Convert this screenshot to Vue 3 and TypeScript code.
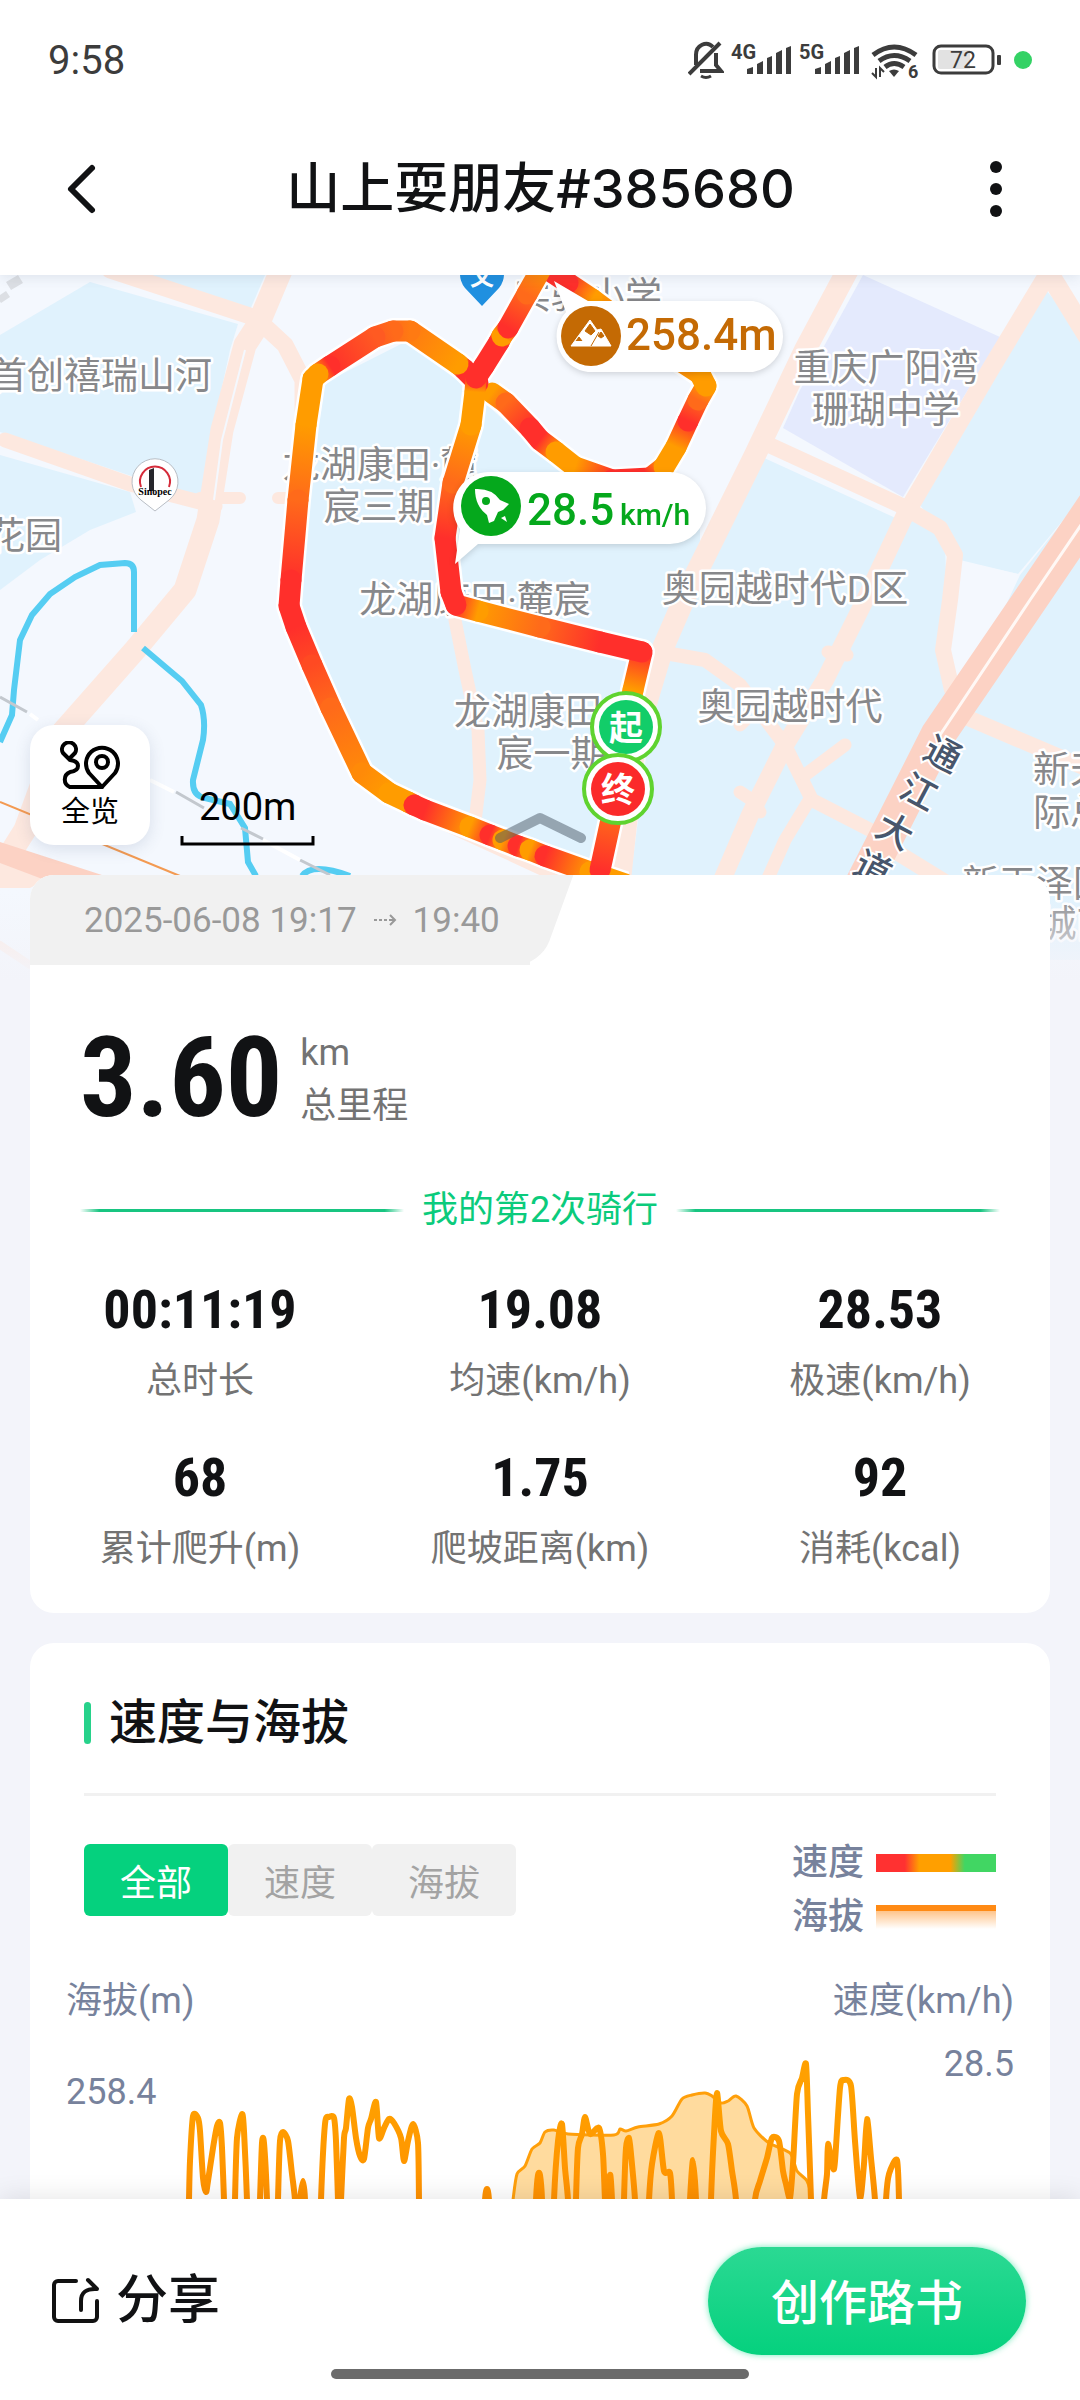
<script setup lang="ts">
import { computed, ref } from 'vue'

type Stop = [number, number, string]
type Point = [number, number]

const R = '#ff2f2b'
const M = '#ff6a1a'
const O = '#ff9c00'

/* Ride track: every vertex carries the colour of the speed at that spot. */
const tracks: Stop[][] = [
  [
    [492, 393, O], [506, 403, M], [530, 428, R], [540, 440, R], [556, 452, O], [575, 467, O], [612, 480, R],
    [650, 478, R], [664, 467, O], [676, 447, O], [688, 421, R], [698, 400, M], [706, 386, O], [700, 374, O],
    [640, 335, M], [592, 299, O], [568, 283, R], [545, 268, R],
  ],
  [
    [478, 383, R], [464, 369, R], [458, 364, O], [410, 331, '#ff7a12'], [393, 331, M], [375, 337, '#ff5a22'],
    [330, 366, R], [318, 374, O], [313, 379, O], [306, 425, O], [298, 500, M], [291, 580, R], [289, 606, R],
    [296, 627, R], [312, 665, '#ff4a22'], [331, 708, '#ff6a1a'], [362, 773, '#ff8a08'], [389, 793, O],
    [408, 802, O], [414, 805, R], [425, 810, R], [470, 827, O], [490, 835, R], [503, 840, O], [518, 846, R],
    [530, 850, O], [545, 856, R], [590, 872, O], [625, 884, O],
  ],
  [
    [618, 789, R], [612, 815, M], [600, 870, R],
  ],
  [
    [626, 727, O], [633, 690, O], [642, 652, R], [600, 642, R], [540, 627, M], [478, 611, O], [456, 605, R],
    [451, 592, R], [445, 538, R], [453, 483, M], [471, 425, O], [475, 392, O], [476, 378, R], [484, 366, R],
    [499, 342, R], [502, 336, O], [508, 328, R], [527, 294, M], [545, 262, O],
  ],
]

const trackPaths = tracks.map((t) => 'M' + t.map(([x, y]) => `${x} ${y}`).join('L'))
const segments = computed(() =>
  tracks.flatMap((t, k) =>
    t.slice(1).map((b, i) => {
      const a = t[i]
      return { id: `seg-${k}-${i}`, x1: a[0], y1: a[1], x2: b[0], y2: b[1], from: a[2], to: b[2] }
    }),
  ),
)

const labels = [
  { text: '首创禧瑞山河', x: 101, y: 389 },
  { text: '花园', x: 25, y: 549 },
  { text: '龙湖康田·麓', x: 380, y: 478 },
  { text: '宸三期', x: 379, y: 520 },
  { text: '龙湖康田·麓宸', x: 475, y: 613 },
  { text: '龙湖康田', x: 528, y: 725 },
  { text: '宸一期', x: 552, y: 767 },
  { text: '奥园越时代D区', x: 785, y: 602 },
  { text: '奥园越时代', x: 790, y: 720 },
  { text: '重庆广阳湾', x: 886, y: 381 },
  { text: '珊瑚中学', x: 886, y: 423 },
  { text: '实验小学', x: 588, y: 309 },
  { text: '新天', x: 1070, y: 783 },
  { text: '际总', x: 1070, y: 826 },
  { text: '新天泽国', x: 1036, y: 897 },
  { text: '际城南', x: 1058, y: 937 },
]
const roadName = [
  { text: '通', x: 943, y: 754 },
  { text: '江', x: 919, y: 792 },
  { text: '大', x: 895, y: 831 },
  { text: '道', x: 873, y: 869 },
]

const stats = [
  { value: '00:11:19', label: '总时长' },
  { value: '19.08', label: '均速(km/h)' },
  { value: '28.53', label: '极速(km/h)' },
  { value: '68', label: '累计爬升(m)' },
  { value: '1.75', label: '爬坡距离(km)' },
  { value: '92', label: '消耗(kcal)' },
]

const tabs = ['全部', '速度', '海拔']
const activeTab = ref('全部')

const speed: Point[] = [
  [188, 2260], [189, 2199], [190, 2160], [193, 2115], [198, 2117], [200, 2130], [203, 2177], [206, 2191], [208, 2180],
  [213, 2147], [217, 2125], [220, 2122], [222, 2147], [224, 2199], [226, 2260], [234, 2260], [235, 2199], [237, 2137],
  [242, 2113], [244, 2130], [247, 2199], [248, 2260], [258, 2260], [260, 2199], [262, 2142], [264, 2142], [267, 2199],
  [268, 2260], [277, 2260], [278, 2199], [280, 2140], [283, 2131], [288, 2140], [292, 2173], [295, 2199], [297, 2240],
  [300, 2199], [303, 2180], [305, 2199], [306, 2260], [320, 2260], [321, 2199], [325, 2123], [329, 2116], [334, 2117],
  [336, 2140], [338, 2199], [339, 2240], [341, 2199], [344, 2137], [346, 2127], [349, 2098], [352, 2106], [356, 2137],
  [360, 2155], [364, 2158], [368, 2127], [371, 2118], [376, 2101], [379, 2137], [384, 2127], [389, 2118], [394, 2122],
  [401, 2137], [404, 2160], [408, 2140], [413, 2123], [418, 2142], [419, 2199], [420, 2260], [482, 2260], [485, 2199],
  [487, 2188], [489, 2199], [492, 2260], [534, 2260], [536, 2199], [538, 2174], [540, 2174], [542, 2199], [543, 2260],
  [553, 2260], [554, 2199], [558, 2140], [562, 2123], [565, 2167], [568, 2199], [570, 2260], [575, 2260], [576, 2199],
  [578, 2147], [582, 2133], [585, 2116], [590, 2133], [599, 2127], [603, 2153], [605, 2199], [607, 2220], [610, 2174],
  [612, 2199], [614, 2260], [623, 2260], [624, 2199], [626, 2147], [629, 2137], [631, 2153], [635, 2199], [637, 2260],
  [647, 2260], [649, 2199], [652, 2163], [659, 2132], [664, 2170], [670, 2172], [672, 2199], [674, 2260], [688, 2260],
  [690, 2199], [693, 2159], [696, 2199], [697, 2260], [710, 2260], [711, 2199], [714, 2133], [717, 2092], [721, 2130],
  [728, 2143], [732, 2170], [736, 2199], [738, 2260], [753, 2260], [755, 2199], [760, 2180], [767, 2157], [772, 2137],
  [779, 2140], [783, 2170], [786, 2183], [790, 2197], [793, 2163], [797, 2093], [802, 2077], [806, 2063], [808, 2113],
  [811, 2199], [812, 2260], [820, 2260], [824, 2199], [827, 2173], [828, 2143], [833, 2167], [835, 2160], [840, 2087],
  [844, 2079], [851, 2085], [855, 2140], [860, 2197], [864, 2163], [867, 2118], [871, 2157], [875, 2199], [878, 2260],
  [884, 2260], [886, 2199], [889, 2173], [897, 2159], [899, 2199], [900, 2260],
]
const altitude: Point[] = [
  [506, 2260], [513, 2199], [517, 2173], [525, 2165], [532, 2148], [540, 2142], [545, 2131], [554, 2129], [568, 2133],
  [614, 2134], [620, 2128], [626, 2130], [638, 2126], [659, 2123], [672, 2115], [682, 2098], [692, 2094], [705, 2092],
  [712, 2095], [721, 2102], [728, 2100], [736, 2095], [747, 2105], [754, 2127], [769, 2142], [790, 2152], [797, 2170],
  [807, 2180], [812, 2199], [820, 2260],
]

/* Soft curve through all the points. */
function smooth(p: Point[]): string {
  const k = 8
  let d = `M${p[0][0]} ${p[0][1]}`
  for (let i = 0; i < p.length - 1; i++) {
    const a = p[i - 1] ?? p[i]
    const b = p[i]
    const c = p[i + 1]
    const e = p[i + 2] ?? c
    d += `C${b[0] + (c[0] - a[0]) / k} ${b[1] + (c[1] - a[1]) / k} ${c[0] - (e[0] - b[0]) / k} ${c[1] - (e[1] - b[1]) / k} ${c[0]} ${c[1]}`
  }
  return d
}
const speedPath = smooth(speed)
const altitudePath = smooth(altitude)
</script>

<template>
  <div class="app">
    <header class="top">
      <div class="status">
        <span class="clock">9:58</span>
        <div class="status-icons">
          <svg class="bell" width="36" height="40" viewBox="0 0 36 40" fill="none" stroke="#3c3c3c" stroke-width="4">
            <path d="M8 25V15a10 11 0 0 1 17-8M28 13v12l5 6H12" />
            <path d="M1 34L32 3" />
            <path d="M13 36q5 3 10 0" stroke-width="3" />
          </svg>
          <svg v-for="net in ['4G', '5G']" :key="net" class="cell" width="61" height="52" viewBox="0 -8 61 52" fill="#3c3c3c">
            <text x="0" y="17" font-size="20" font-weight="700">{{ net }}</text>
            <path d="M16 32v-5l6-2v7zM26 32V22l6-3v13zM36 32V16l5-2v18zM45 32V11l6-3v24zM55 32V6l5-2v28z" />
          </svg>
          <svg class="wifi" width="50" height="56" viewBox="0 -8 50 56" fill="none" stroke="#3c3c3c" stroke-width="5">
            <path d="M2 15q21-16 43 0M8 21q15-11 31 0M14 27q9-7 19 0" />
            <path d="M18 31q5-3 10 0l-5 6z" fill="#3c3c3c" stroke="none" />
            <path d="M5 28v9l-4-4M9 37v-9l4 4" stroke-width="2" />
            <text x="37" y="38" font-size="18" font-weight="700" fill="#3c3c3c" stroke="none">6</text>
          </svg>
          <svg class="battery" width="70" height="32" viewBox="0 0 70 32">
            <rect x="2" y="2" width="59" height="27" rx="7" fill="none" stroke="#3c3c3c" stroke-width="3" />
            <path d="M8 6h30v19H8a2 2 0 0 1-2-2V8a2 2 0 0 1 2-2" fill="#e2e2e2" />
            <rect x="65" y="11" width="4" height="10" rx="1" fill="#3c3c3c" />
            <text x="31" y="24" font-size="23" text-anchor="middle" fill="#3c3c3c">72</text>
          </svg>
          <span class="live"></span>
        </div>
      </div>
      <div class="nav">
        <button class="icon-btn" type="button" aria-label="返回">
          <svg width="44" height="54" viewBox="0 0 44 54" fill="none" stroke="#111214" stroke-width="6" stroke-linecap="round" stroke-linejoin="round">
            <path d="M32 6L11 27l21 21" />
          </svg>
        </button>
        <h1>山上耍朋友#385680</h1>
        <button class="icon-btn" type="button" aria-label="更多">
          <svg width="38" height="60" viewBox="0 0 38 60" fill="#111214">
            <circle cx="19" cy="8" r="6" /><circle cx="19" cy="30" r="6" /><circle cx="19" cy="52" r="6" />
          </svg>
        </button>
      </div>
    </header>

    <main class="scroll">
      <section class="map">
        <svg class="map-canvas" viewBox="0 275 1080 705">
          <defs>
            <linearGradient id="fade" x1="0" y1="0" x2="0" y2="1">
              <stop offset="0" stop-color="#f3f4fa" stop-opacity="0" />
              <stop offset="1" stop-color="#f3f4fa" />
            </linearGradient>
            <linearGradient v-for="s in segments" :id="s.id" :key="s.id" gradientUnits="userSpaceOnUse" :x1="s.x1" :y1="s.y1" :x2="s.x2" :y2="s.y2">
              <stop offset="0" :stop-color="s.from" />
              <stop offset="1" :stop-color="s.to" />
            </linearGradient>
          </defs>
          <rect y="275" width="1080" height="705" fill="#f4f8fe" />
          <g fill="#e0f2fd">
            <path d="M0 335L90 282L238 324L230 350L215 420L203 500L0 432Z" />
            <path d="M125 275H265L250 310Z" />
            <path d="M0 455L130 492L136 512L90 530L40 560L0 590Z" />
            <path d="M320 385L405 342L468 388L560 470L700 490V545L668 640L620 875H560L380 800L310 650L292 560Z" />
            <path d="M762 457L900 520L920 510L945 545L950 680L985 650L1020 575L1080 500V960H620L665 610Z" />
            <path d="M1046 290L1080 330V500L1018 574L960 560L915 498L1000 350Z" />
          </g>
          <path d="M548 350L700 380L650 470L600 475Z" fill="#f4f8fe" />
          <path d="M964 562L1018 574L956 680L950 640Z" fill="#f4f8fe" />
          <path d="M863 275L1000 337L903 497L783 428L800 390Z" fill="#e4eafd" />
          <g fill="none" stroke="#fde8df" stroke-linecap="round" stroke-linejoin="round">
            <path d="M110 270L250 316" stroke-width="17" />
            <path d="M5 440L130 484L215 506" stroke-width="15" />
            <path d="M200 498H240M278 498H295" stroke-width="12" />
            <path d="M282 268L258 325L245 345L222 430L208 520L185 590L135 650L60 735L25 830L0 870" stroke-width="23" />
            <path d="M258 320L285 345L303 380V410" stroke-width="17" />
            <path d="M455 620L465 670L478 730L480 780L474 830" stroke-width="13" />
            <path d="M852 262L805 350L755 455L688 590L662 650L635 740L620 880" stroke-width="22" />
            <path d="M1055 262L990 370L905 515L865 600L825 680L785 745L750 815L720 885" stroke-width="18" />
            <path d="M1050 275L1090 340" stroke-width="20" />
            <path d="M765 443L900 505L940 528L955 555L950 600L943 650L952 690" stroke-width="16" />
            <path d="M665 653L705 660L740 685L785 745L812 800L880 835" stroke-width="14" />
            <path d="M828 652L847 655M740 792L752 800L760 812M805 775L845 745M808 802L785 840L765 885M740 725L745 720" stroke-width="13" />
            <path d="M968 718L1060 757L1095 772M885 845L950 885" stroke-width="16" />
            <path d="M430 820L560 880M0 945L30 965" stroke-width="8" />
          </g>
          <path d="M245 350L222 440L214 500" fill="none" stroke="#f4f8fe" stroke-width="2" />
          <path d="M0 842L105 876L40 882L0 865Z" fill="#fcd2c4" />
          <path d="M0 863L45 880L30 888H0Z" fill="#fde8df" />
          <path d="M1115 475L1030 600L938 735L895 820L862 885" fill="none" stroke="#fcd2c4" stroke-width="35" />
          <path d="M1115 475L1030 600L940 735" fill="none" stroke="#fff8f5" stroke-width="3" />
          <g fill="none" stroke="#55cdf2" stroke-width="6">
            <path d="M0 742L12 715L14 690L20 640L32 615L50 594L75 577L100 565L125 563Q134 563 134 572V632" />
            <path d="M143 648L182 681L201 705Q206 720 203 740L193 780Q192 796 205 798L230 804L245 828L248 862L256 876M302 876Q312 862 350 876" />
          </g>
          <path d="M0 802L180 876" stroke="#f39a52" stroke-width="2" />
          <path d="M0 697L27 712M176 792L204 808M241 828L263 839M300 860L330 875" stroke="#c3c8ce" stroke-width="3" />
          <path d="M30 714L38 720M150 780L174 792M263 840L300 860" stroke="#fff" stroke-width="4" />
          <g fill="#dcdfe4"><path d="M6 282l12-7 5 8-12 7zM-3 297l9-6 4 6-9 6z" /></g>

          <g class="map-label" text-anchor="middle">
            <text v-for="l in labels" :key="l.text" :x="l.x" :y="l.y">{{ l.text }}</text>
          </g>
          <g class="road-label" text-anchor="middle">
            <text v-for="c in roadName" :key="c.text" :transform="`translate(${c.x} ${c.y}) rotate(28)`" y="13">{{ c.text }}</text>
          </g>

          <path d="M482 306L465 288A22 22 0 1 1 499 288Z" fill="#2090e0" />
          <text x="482" y="285" font-size="24" font-weight="700" fill="#fff" text-anchor="middle">文</text>

          <g>
            <path d="M155 511L141 500A23 23 0 1 1 169 500Z" fill="#fff" stroke="#b9bec5" stroke-width="1" />
            <path d="M141 487A15 15 0 1 1 169 487" fill="none" stroke="#d52b3a" stroke-width="2" />
            <path d="M149 491V470l5-2v23z" fill="#26262b" />
            <text x="155" y="495" class="brand" text-anchor="middle">Sinopec</text>
          </g>

          <g fill="none" stroke-linejoin="round">
            <path v-for="(d, i) in trackPaths" :key="'o' + i" :d="d" stroke="#fff" stroke-width="26" />
            <g stroke-width="21" stroke-linecap="round">
              <path v-for="s in segments" :key="'p' + s.id" :d="`M${s.x1} ${s.y1}L${s.x2} ${s.y2}`" :stroke="`url(#${s.id})`" />
            </g>
          </g>
          <path d="M500 838L540 818L581 838" fill="none" stroke="#4a5866" stroke-opacity=".5" stroke-width="10" stroke-linecap="round" stroke-linejoin="round" />

          <g class="marker" text-anchor="middle">
            <circle cx="626" cy="727" r="34" fill="#fff" stroke="#5fd32f" stroke-width="4" />
            <circle cx="626" cy="727" r="27" fill="#12cd69" />
            <text x="626" y="740">起</text>
            <circle cx="618" cy="789" r="34" fill="#fff" stroke="#5fd32f" stroke-width="4" />
            <circle cx="618" cy="789" r="27" fill="#fb2a2a" />
            <text x="618" y="802">终</text>
          </g>

          <g class="pill">
            <path d="M588 301L554 281L566 312A36 36 0 0 0 588 372H753A36 36 0 0 0 753 301Z" fill="#fff" />
            <circle cx="591" cy="336" r="30" fill="#c46a04" />
            <path d="M571 346L590 320L597 330L601 329L611 346Z" fill="#fff" stroke="#fff" stroke-width="1" stroke-linejoin="round" />
            <path d="M585 331L590 324L595 331L591 335ZM576 341l3-4 3 4M598 336l3-4 3 4-3 2zM591 346l8-14" fill="#c46a04" stroke="#c46a04" stroke-width="1" />
            <text x="626" y="350" font-size="44" fill="#c46a04">258.4m</text>
          </g>
          <g class="pill">
            <path d="M488 472H670A36 36 0 0 1 670 544H478L455 564L460 529A36 36 0 0 1 488 472Z" fill="#fff" />
            <circle cx="491" cy="506" r="30" fill="#05a81c" />
            <path d="M475 489Q492 488 500 500L509 504L503 510L498 512L494 521L489 523L487 515Q475 506 475 489Z" fill="#fff" />
            <circle cx="486" cy="501" r="4" fill="#05a81c" />
            <path d="M501 518l4-2 2 6z" fill="#fff" />
            <text x="527" y="525" font-size="44" fill="#05a81c">28.5</text>
            <text x="620" y="525" font-size="30" fill="#05a81c">km/h</text>
          </g>

          <text x="199" y="820" font-size="38" fill="#000">200m</text>
          <path d="M182 836v8h131v-8" fill="none" stroke="#000" stroke-width="3" />
          <rect y="890" width="1080" height="90" fill="url(#fade)" />
        </svg>
        <button class="overview" type="button">
          <svg width="62" height="50" viewBox="-1 -1 62 50" fill="none" stroke="#000" stroke-width="4" stroke-linecap="round" stroke-linejoin="round">
            <path d="M9 17L3 11A7 7 0 1 1 15 11Z" />
            <path d="M10 18Q18 19 18 24T10 30A8 8 0 0 0 10 45H42" />
            <path d="M42 45L29 31A16 16 0 1 1 55 31Z" />
            <circle cx="42" cy="20" r="6" />
          </svg>
          <span>全览</span>
        </button>
      </section>

      <section class="card summary">
        <div class="period">
          <span>2025-06-08 19:17</span>
          <svg width="24" height="14" viewBox="0 0 24 14" fill="none" stroke="#999" stroke-width="2">
            <path d="M1 7h14" stroke-dasharray="3 2" /><path d="M16 7h6M17 2l5 5-5 5" />
          </svg>
          <span>19:40</span>
        </div>
        <div class="distance">
          <strong>3.60</strong>
          <div class="unit"><span>km</span><span>总里程</span></div>
        </div>
        <div class="ordinal"><i></i><span>我的第2次骑行</span><i></i></div>
        <dl class="stats">
          <div v-for="s in stats" :key="s.label">
            <dd>{{ s.value }}</dd>
            <dt>{{ s.label }}</dt>
          </div>
        </dl>
      </section>

      <section class="card chart-card">
        <h2>速度与海拔</h2>
        <div class="controls">
          <div class="tabs">
            <button v-for="t in tabs" :key="t" type="button" :class="{ active: t === activeTab }" @click="activeTab = t">{{ t }}</button>
          </div>
          <div class="legend">
            <div><span>速度</span><i class="speed-key"></i></div>
            <div><span>海拔</span><i class="alt-key"></i></div>
          </div>
        </div>
        <div class="axis-titles"><span>海拔(m)</span><span>速度(km/h)</span></div>
        <div class="plot">
          <span class="alt-max">258.4</span>
          <svg viewBox="176 2037 728 213">
            <defs>
              <linearGradient id="line" gradientUnits="userSpaceOnUse" x1="0" y1="2100" x2="0" y2="2230">
                <stop offset="0" stop-color="#ffa000" />
                <stop offset="1" stop-color="#ff8c00" />
              </linearGradient>
            </defs>
            <path :d="altitudePath" fill="#ffa000" fill-opacity=".38" stroke="#ff9f0a" stroke-width="3" />
            <path :d="speedPath" fill="none" stroke="url(#line)" stroke-width="6" stroke-linejoin="round" />
          </svg>
          <span class="speed-max">28.5</span>
        </div>
      </section>
    </main>

    <footer class="bottom">
      <div class="actions">
        <button class="share" type="button">
          <svg width="48" height="48" viewBox="0 0 48 48" fill="none" stroke="#111" stroke-width="4" stroke-linecap="round" stroke-linejoin="round">
            <path d="M25 4H7a4 4 0 0 0-4 4v32a4 4 0 0 0 4 4h35a4 4 0 0 0 4-4V24" />
            <path d="M30 33V24Q30 11 46 12L37 3" />
          </svg>
          <span>分享</span>
        </button>
        <button class="create" type="button">创作路书</button>
      </div>
      <div class="home-bar"></div>
    </footer>
  </div>
</template>

<style>
body {
  margin: 0;
}
</style>

<style scoped>
.app {
  display: flex;
  flex-direction: column;
  height: 100vh;
  background: #f3f4fa;
  color: #111214;
  font-family: Roboto, 'Noto Sans CJK SC', sans-serif;
  font-size: 36px;
}
.app *,
.app *::before,
.app *::after {
  box-sizing: border-box;
}
button {
  border: 0;
  padding: 0;
  background: none;
  color: inherit;
  font: inherit;
}
svg {
  display: block;
}
.top {
  position: relative;
  z-index: 2;
  background: #fff;
  box-shadow: 0 2px 12px rgba(60, 70, 100, 0.12);
}
.status {
  display: flex;
  align-items: center;
  justify-content: space-between;
  height: 120px;
  padding: 0 48px;
  color: #3c3c3c;
}
.clock {
  font-size: 40px;
}
.status-icons {
  display: flex;
  align-items: center;
}
.bell,
.cell {
  margin-right: 7px;
}
.wifi {
  margin: 0 11px 0 4px;
}
.battery {
  margin-right: 12px;
}
.live {
  width: 18px;
  height: 18px;
  border-radius: 50%;
  background: #34d265;
}
.nav {
  display: flex;
  align-items: center;
  justify-content: space-between;
  height: 155px;
  padding: 0 65px 18px 60px;
}
h1 {
  margin: 0;
  font-family: Inter, 'Noto Sans CJK SC', sans-serif;
  font-size: 54px;
  font-weight: 500;
  line-height: 72px;
}
.scroll {
  flex: 1;
  min-height: 0;
  overflow-y: auto;
  scrollbar-width: none;
}
.map {
  position: relative;
}
.map-canvas {
  width: 100%;
}
.map-label {
  font-size: 37px;
  fill: #87888b;
  stroke: #fff;
  stroke-width: 5px;
  stroke-linejoin: round;
  paint-order: stroke;
}
.road-label {
  font-size: 36px;
  font-weight: 500;
  fill: #48566c;
  stroke: #fff;
  stroke-width: 4px;
  paint-order: stroke;
}
.brand {
  font-family: 'Liberation Serif', serif;
  font-size: 10px;
  font-weight: 700;
}
.marker text {
  font-size: 34px;
  font-weight: 700;
  fill: #fff;
}
.pill {
  font-weight: 500;
  filter: drop-shadow(0 2px 3px rgba(0, 0, 0, 0.15));
}
.overview {
  position: absolute;
  left: 30px;
  top: 450px;
  display: flex;
  flex-direction: column;
  align-items: center;
  width: 120px;
  height: 120px;
  padding-top: 16px;
  border-radius: 24px;
  background: #fff;
  box-shadow: 0 4px 16px rgba(60, 80, 120, 0.15);
  color: #000;
  font-size: 29px;
  line-height: 42px;
}
.card {
  position: relative;
  margin: 0 30px 30px;
  border-radius: 24px;
  background: #fff;
}
.summary {
  margin-top: -105px;
  padding-bottom: 38px;
}
.period {
  position: relative;
  z-index: 0;
  display: flex;
  align-items: center;
  gap: 16px;
  width: 500px;
  height: 90px;
  padding-left: 54px;
  border-radius: 24px 0 0 0;
  background: #f1f1f1;
  color: #999;
  font-size: 35px;
  white-space: nowrap;
}
.period::after {
  content: '';
  position: absolute;
  z-index: -1;
  top: 0;
  right: -27px;
  width: 60px;
  height: 90px;
  border-radius: 0 0 24px 0;
  background: #f1f1f1;
  transform: skewX(-20deg);
}
.distance {
  display: flex;
  align-items: flex-end;
  gap: 18px;
  padding: 58px 50px 0;
}
.distance strong,
dd {
  font-family: 'Liberation Sans Narrow', 'Roboto Condensed', Roboto, sans-serif;
  font-weight: 700;
}
.distance strong {
  font-size: 112px;
  line-height: 110px;
}
.unit {
  display: flex;
  flex-direction: column;
  color: #737373;
  line-height: 53px;
}
.ordinal {
  display: flex;
  align-items: center;
  gap: 18px;
  padding: 0 50px;
  margin-top: 51px;
  color: #0bcb7c;
  line-height: 52px;
}
.ordinal i {
  flex: 1;
  height: 3px;
  background: linear-gradient(90deg, transparent, #18c581 6%, #18c581 94%, transparent);
}
.stats {
  display: grid;
  grid-template-columns: repeat(3, 1fr);
  row-gap: 41px;
  margin: 44px 0 0;
  text-align: center;
}
.stats div {
  display: flex;
  flex-direction: column;
  gap: 15px;
}
dd {
  margin: 0;
  font-size: 54px;
  line-height: 60px;
}
dt {
  color: #737373;
  line-height: 52px;
}
.chart-card {
  padding: 50px 36px 0;
}
h2 {
  display: flex;
  align-items: center;
  gap: 18px;
  margin: 0 18px;
  padding-bottom: 40px;
  border-bottom: 3px solid #f1f1f1;
  font-size: 48px;
  font-weight: 500;
  line-height: 60px;
}
h2::before {
  content: '';
  width: 7px;
  height: 42px;
  border-radius: 4px;
  background: #27d28b;
}
.controls {
  display: flex;
  align-items: flex-start;
  justify-content: space-between;
  margin: 40px 18px 0;
}
.tabs {
  display: flex;
  margin-top: 8px;
}
.tabs button {
  width: 144px;
  height: 72px;
  border-radius: 6px;
  background: #f1f1f1;
  color: #a3a3a3;
}
.tabs .active {
  background: #05d17e;
  color: #fff;
}
.legend {
  color: #77829c;
  font-weight: 500;
  line-height: 54px;
}
.legend div {
  display: flex;
  align-items: center;
  gap: 12px;
}
.legend i {
  width: 120px;
}
.speed-key {
  height: 18px;
  background: linear-gradient(90deg, #ff3131 24%, #ff9f00 36%, #ff9f00 62%, #41d663 74%);
}
.alt-key {
  height: 24px;
  border-top: 6px solid #ff8a14;
  background: linear-gradient(#ffc48a, #fff);
}
.axis-titles,
.plot {
  display: flex;
  justify-content: space-between;
  color: #77829c;
  line-height: 52px;
}
.axis-titles {
  margin-top: 31px;
}
.plot {
  align-items: flex-start;
  margin-top: 11px;
}
.plot span {
  width: 110px;
}
.plot svg {
  flex: 1;
  min-width: 0;
}
.alt-max {
  margin-top: 28px;
}
.speed-max {
  text-align: right;
}
.bottom {
  position: relative;
  z-index: 2;
  padding: 48px 0 21px;
  background: #fff;
  box-shadow: 0 -2px 24px rgba(0, 0, 0, 0.1);
}
.actions {
  display: flex;
  align-items: center;
  justify-content: space-between;
  padding: 0 54px 0 51px;
}
.share {
  display: flex;
  align-items: center;
  gap: 17px;
  font-size: 52px;
  font-weight: 500;
  line-height: 72px;
}
.create {
  width: 318px;
  height: 108px;
  padding-bottom: 4px;
  border-radius: 54px;
  background: linear-gradient(#2bd993, #05d17e);
  box-shadow: 0 0 6px rgba(20, 220, 140, 0.6);
  color: #fff;
  font-size: 48px;
  font-weight: 500;
}
.home-bar {
  width: 418px;
  height: 10px;
  margin: 14px auto 0;
  border-radius: 5px;
  background: #6b6b6b;
}
</style>
